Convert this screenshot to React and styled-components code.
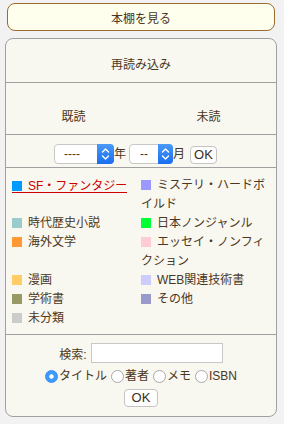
import React from "react";
import styled, { createGlobalStyle } from "styled-components";

const Global = createGlobalStyle`
  html, body { margin: 0; padding: 0; background: #f2f2f2; }
  body {
    font-family: "Liberation Sans", "Noto Sans CJK JP", sans-serif;
    font-size: 12px;
    color: #4b3621;
  }
`;

const Wrapper = styled.div`
  padding: 3px 7px 7px 5px;
`;

const TopButton = styled.button`
  display: block;
  box-sizing: border-box;
  margin: 0 2px 7px;
  width: calc(100% - 4px);
  height: 28px;
  border: 1px solid #9c6b30;
  border-radius: 8px;
  background: #ffffee;
  color: #4b3621;
  font: inherit;
  font-size: 12px;
  padding: 0;
`;

const Panel = styled.div`
  box-sizing: border-box;
  border: 1px solid #a0a0a0;
  border-radius: 8px;
  background: #f8f7f0;
  overflow: hidden;
`;

const Section = styled.div`
  box-sizing: border-box;
  height: ${(p) => p.$h}px;
  border-top: ${(p) => (p.$first ? "none" : "1px solid #a0a0a0")};
`;

const ReloadRow = styled(Section)`
  text-align: center;
  padding-top: 17px;
  line-height: 19px;
`;

const ReadRow = styled(Section)`
  display: grid;
  grid-template-columns: 1fr 1fr;
  padding-top: 25px;
  line-height: 19px;
  text-align: center;
`;

const DateRow = styled(Section)`
  display: flex;
  justify-content: center;
  align-items: flex-start;
  padding: 9px 11px 0 0;
  line-height: 20px;
`;

const FakeSelect = styled.div`
  box-sizing: border-box;
  position: relative;
  width: ${(p) => p.$w}px;
  height: 20px;
  border: 1px solid #c8c8c8;
  border-radius: 4px;
  background: #fff;
  padding-left: ${(p) => p.$pl}px;
  line-height: 18px;
  color: #4b3621;
  margin-left: ${(p) => p.$ml || 0}px;
`;

const Arrow = styled.span`
  position: absolute;
  top: -1px;
  right: -1px;
  width: ${(p) => p.$w}px;
  height: 20px;
  border-radius: 0 4px 4px 0;
  background: linear-gradient(#4a9af8, #1a6eef);
  display: flex;
  align-items: center;
  justify-content: center;
`;

const Unit = styled.span`
  line-height: 20px;
`;

const SmallButton = styled.button`
  box-sizing: border-box;
  width: ${(p) => p.$w}px;
  height: 18px;
  margin-left: ${(p) => p.$ml || 0}px;
  margin-top: ${(p) => p.$mt || 0}px;
  border: 1px solid #c4c4c4;
  border-radius: 4px;
  background: #fff;
  color: #3a2c1e;
  font-family: "Liberation Sans", sans-serif;
  font-size: 13px;
  padding: 0;
  line-height: 16px;
`;

const CatList = styled(Section)`
  display: grid;
  grid-template-columns: 129px 129px;
  align-content: start;
  padding: 8px 0 0 6px;
  line-height: 19px;
  margin: 0;
  list-style: none;
`;

const CatItem = styled.li`
  color: ${(p) => (p.$active ? "#cc0000" : "#4b3621")};
  word-break: normal;
`;

const ActiveLink = styled.span`
  display: inline-block;
  line-height: 12px;
  border-bottom: 1px solid #cc0000;
  vertical-align: -1px;
`;

const Swatch = styled.span`
  display: inline-block;
  width: 10px;
  height: 10px;
  background: ${(p) => p.$c};
  margin-right: 6px;
  vertical-align: -1px;
`;

const SearchSection = styled(Section)`
  display: flex;
  flex-direction: column;
  align-items: center;
  padding-top: 8px;
`;

const SearchLine = styled.div`
  display: flex;
  align-items: center;
  height: 20px;
`;

const SearchLabel = styled.span`
  margin-right: 4px;
`;

const TextInput = styled.input`
  box-sizing: border-box;
  width: 132px;
  height: 20px;
  border: 1px solid #c8c8c8;
  background: #fff;
  margin: 0;
  padding: 0 3px;
`;

const RadioLine = styled.div`
  display: flex;
  align-items: center;
  height: 19px;
  margin-top: 4px;
  line-height: 19px;
`;

const RadioLabel = styled.label`
  display: flex;
  align-items: center;
  margin-left: ${(p) => (p.$first ? 0 : 4)}px;
`;

const Radio = styled.input`
  appearance: none;
  box-sizing: border-box;
  width: 13px;
  height: 13px;
  margin: 0 1px 0 0;
  border-radius: 50%;
  border: 1px solid #a9a9a9;
  background: #fff;
  &:checked {
    border-color: #3a8ef0;
    background: radial-gradient(circle, #fff 0 1.8px, #3d99fc 2.6px);
  }
`;

const Chevrons = () => (
  <svg width="9" height="14" viewBox="0 0 9 14">
    <path d="M1.5 5 L4.5 2 L7.5 5" fill="none" stroke="#fff" strokeWidth="1.4" strokeLinecap="round" strokeLinejoin="round" />
    <path d="M1.5 9 L4.5 12 L7.5 9" fill="none" stroke="#fff" strokeWidth="1.4" strokeLinecap="round" strokeLinejoin="round" />
  </svg>
);

const cats = [
  { label: "SF・ファンタジー", c: "#0099ff", active: true },
  { label: "ミステリ・ハードボイルド", c: "#9999ff" },
  { label: "時代歴史小説", c: "#99cccc" },
  { label: "日本ノンジャンル", c: "#00ff33" },
  { label: "海外文学", c: "#ff9933" },
  { label: "エッセイ・ノンフィクション", c: "#ffccd5" },
  { label: "漫画", c: "#ffcc66" },
  { label: "WEB関連技術書", c: "#ccccff" },
  { label: "学術書", c: "#999966" },
  { label: "その他", c: "#9999cc" },
  { label: "未分類", c: "#cccccc" },
];

export default function App() {
  return (
    <>
      <Global />
      <Wrapper>
        <TopButton>本棚を見る</TopButton>
        <Panel>
          <ReloadRow $h={43} $first>再読み込み</ReloadRow>
          <ReadRow $h={52}>
            <span>既読</span>
            <span>未読</span>
          </ReadRow>
          <DateRow $h={33}>
            <FakeSelect $w={60} $pl={9}>
              ----
              <Arrow $w={17}><Chevrons /></Arrow>
            </FakeSelect>
            <Unit>年</Unit>
            <FakeSelect $w={44} $pl={10} $ml={3}>
              --
              <Arrow $w={15}><Chevrons /></Arrow>
            </FakeSelect>
            <Unit>月</Unit>
            <SmallButton $w={27} $ml={5} $mt={2}>OK</SmallButton>
          </DateRow>
          <CatList as="ul" $h={167}>
            {cats.map((k) => (
              <CatItem key={k.label} $active={k.active}>
                {k.active ? (
                  <ActiveLink>
                    <Swatch $c={k.c} />
                    {k.label}
                  </ActiveLink>
                ) : (
                  <>
                    <Swatch $c={k.c} />
                    {k.label}
                  </>
                )}
              </CatItem>
            ))}
          </CatList>
          <SearchSection $h={82}>
            <SearchLine>
              <SearchLabel>検索:</SearchLabel>
              <TextInput type="text" />
            </SearchLine>
            <RadioLine>
              <RadioLabel $first>
                <Radio type="radio" name="t" defaultChecked />
                タイトル
              </RadioLabel>
              <RadioLabel>
                <Radio type="radio" name="t" />
                著者
              </RadioLabel>
              <RadioLabel>
                <Radio type="radio" name="t" />
                メモ
              </RadioLabel>
              <RadioLabel>
                <Radio type="radio" name="t" />
                ISBN
              </RadioLabel>
            </RadioLine>
            <SmallButton $w={34} $mt={3}>OK</SmallButton>
          </SearchSection>
        </Panel>
      </Wrapper>
    </>
  );
}
